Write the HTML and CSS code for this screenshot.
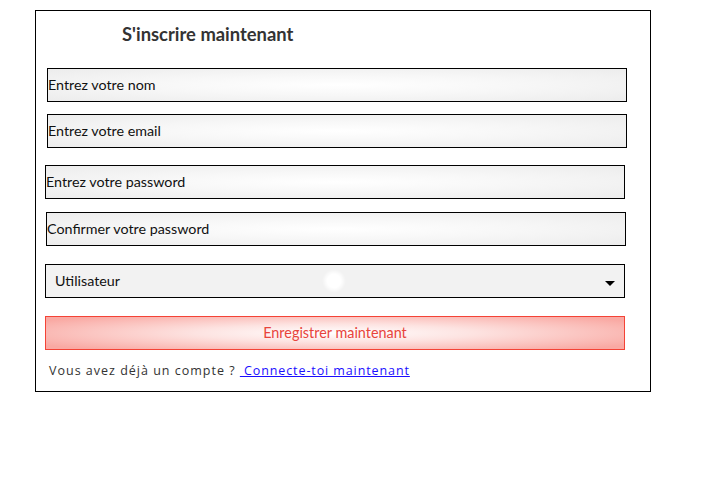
FILE: index.html
```html
<!DOCTYPE html>
<html lang="fr">
<head>
<meta charset="utf-8">
<link rel="stylesheet" href="styles.css">
</head>
<body>
<div class="card">
  <h2 class="title">S'inscrire maintenant</h2>
  <div class="field f1">Entrez votre nom</div>
  <div class="field f2">Entrez votre email</div>
  <div class="field f3">Entrez votre password</div>
  <div class="field f4">Confirmer votre password</div>
  <div class="select">
    <span>Utilisateur</span>
    <span class="spot"></span>
    <svg class="caret" width="10" height="5" viewBox="0 0 10 5"><path d="M0 0H10L5 5Z" fill="#000"/></svg>
  </div>
  <div class="btn">Enregistrer maintenant</div>
  <p class="footer">Vous avez déjà un compte ? <a href="#">&nbsp;Connecte-toi maintenant</a></p>
</div>
</body>
</html>
```
FILE: styles.css
```css
html, body { margin: 0; padding: 0; background: #fff; }
body { font-family: "Lato", "Open Sans", sans-serif; }
.card {
  box-sizing: border-box;
  margin: 10px 0 0 35px;
  width: 616px;
  height: 382px;
  border: 1px solid #000;
  display: flex;
  flex-direction: column;
}
.title {
  margin: 12px 0 0 86px;
  font-size: 18.4px;
  font-weight: bold;
  color: #333;
  line-height: 22px;
}
.field {
  box-sizing: border-box;
  width: 580px;
  height: 34px;
  border: 1px solid #000;
  background: radial-gradient(ellipse at 50% 50%, #ffffff 0%, #f7f7f7 45%, #ececec 100%);
  font-size: 14.3px;
  color: #111;
  display: flex;
  align-items: center;
  padding-bottom: 1px;
}
.f1 { margin: 23px 0 0 11px; }
.f2 { margin: 12px 0 0 11px; }
.f3 { margin: 17px 0 0 9px; }
.f4 { margin: 13px 0 0 10px; }
.select {
  box-sizing: border-box;
  position: relative;
  width: 580px;
  height: 34px;
  margin: 18px 0 0 9px;
  border: 1px solid #000;
  background: #f2f2f2;
  font-size: 14.3px;
  color: #111;
  display: flex;
  align-items: center;
  padding: 0 0 1px 9px;
}
.spot {
  position: absolute;
  left: 276px;
  top: 4px;
  width: 24px;
  height: 24px;
  border-radius: 50%;
  background: radial-gradient(circle, #fff 40%, rgba(255,255,255,0) 70%);
}
.caret { position: absolute; right: 9px; top: 16px; }
.btn {
  box-sizing: border-box;
  width: 580px;
  height: 34px;
  margin: 18px 0 0 9px;
  border: 1px solid #f44336;
  background: radial-gradient(ellipse 60% 70% at 50% 50%, #ffffff 0%, #fde3e1 40%, #f9a9a3 100%);
  color: #e8443c;
  font-size: 14.4px;
  display: flex;
  align-items: center;
  justify-content: center;
  padding-bottom: 1px;
}
.footer {
  margin: 12px 0 0 13px;
  font-family: "Open Sans", sans-serif;
  font-size: 12.5px;
  letter-spacing: 1px;
  color: #333;
}
.footer a { color: #1a0dff; letter-spacing: 0.9px; }
```
